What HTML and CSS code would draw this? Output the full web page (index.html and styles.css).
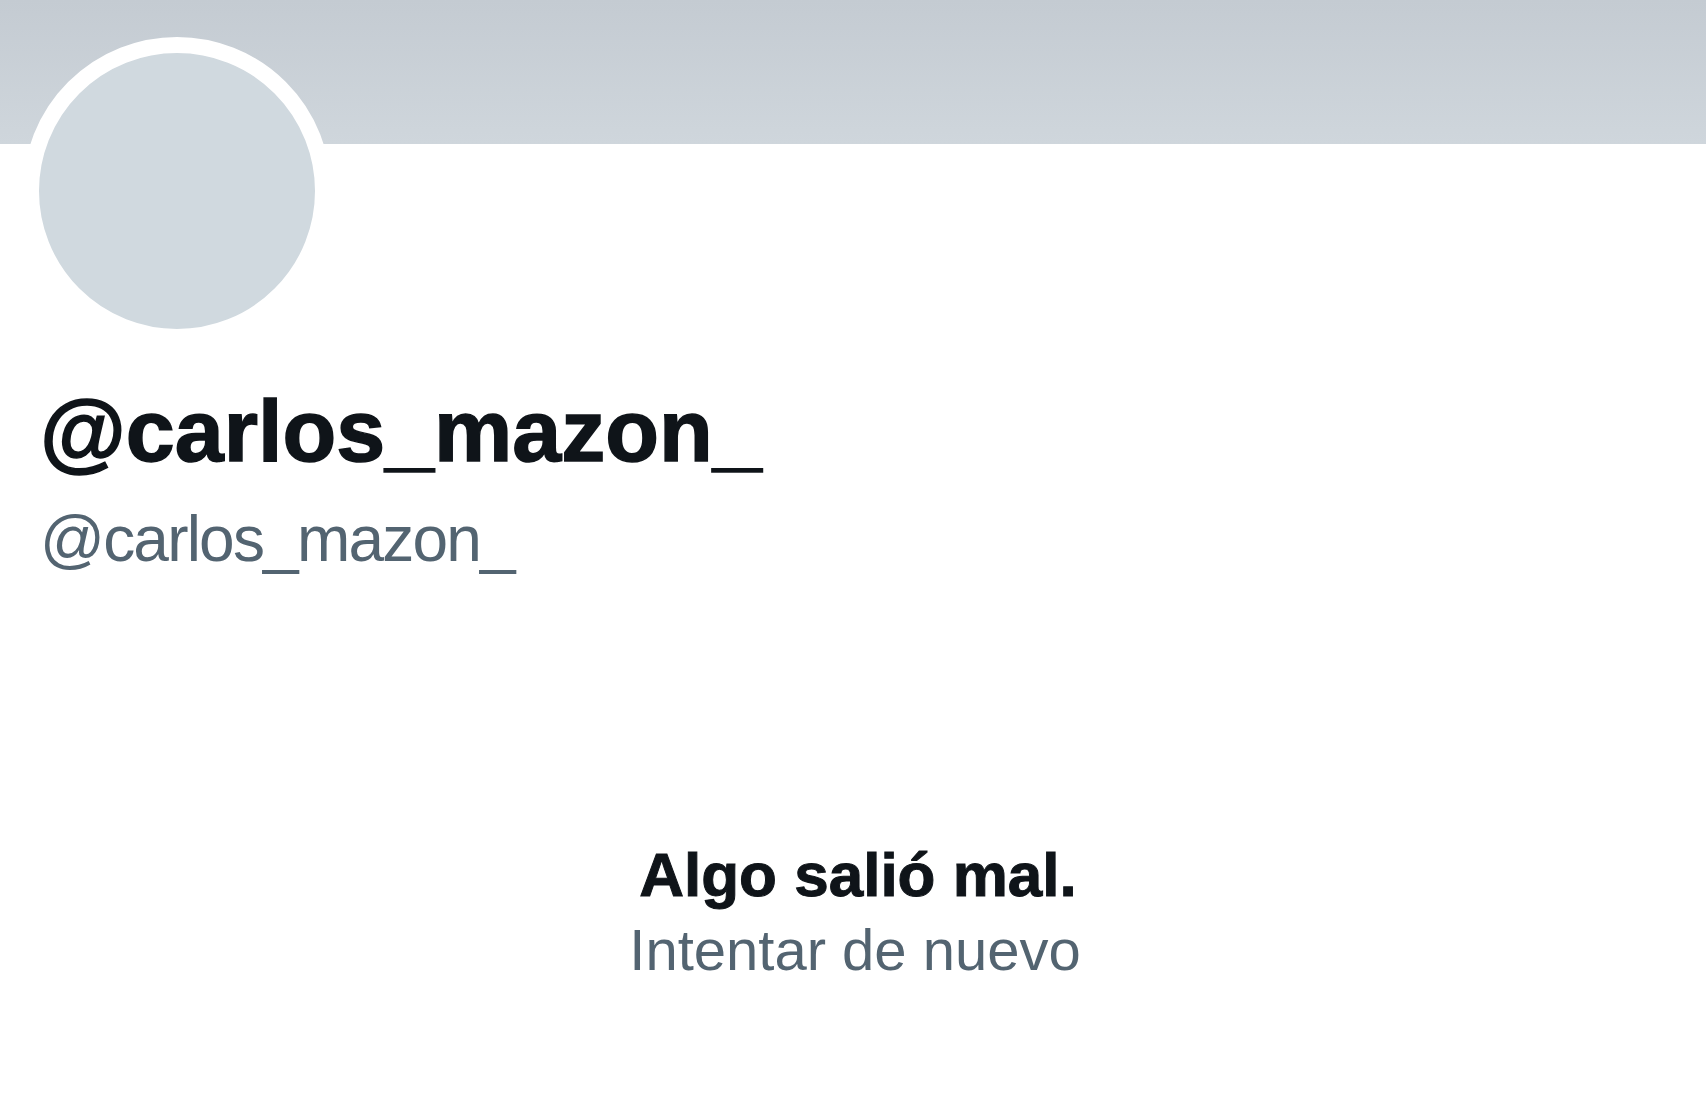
FILE: index.html
```html
<!DOCTYPE html>
<html lang="es">
<head>
    <meta charset="UTF-8">
    <meta name="viewport" content="width=device-width, initial-scale=1.0">
    <title>@carlos_mazon_</title>
    <link rel="stylesheet" href="styles.css">
</head>
<body>
    <div class="banner"></div>

    <div class="profile">
        <div class="avatar"></div>
        <div class="names">
            <h1 class="display-name">@carlos_mazon_</h1>
            <p class="handle">@carlos_mazon_</p>
        </div>
    </div>

    <div class="error-box">
        <p class="error-title">Algo salió mal.</p>
        <a href="#" class="retry">Intentar de nuevo</a>
    </div>
</body>
</html>
```

FILE: styles.css
```css
body {
    margin: 0;
    font-family: "Liberation Sans", Arial, sans-serif;
    background-color: #fff;
    color: #0f1419;
    overflow: hidden;
}

.banner {
    height: 144px;
    background: linear-gradient(to bottom, #c4cbd2, #cfd6dc);
}

.profile {
    padding-left: 23px;
}

.avatar {
    width: 276px;
    height: 276px;
    margin-top: -107px;
    border: 16px solid #fff;
    border-radius: 50%;
    background-color: #d0d9df;
}

.names {
    padding-left: 17px;
    margin-top: 42px;
}

.display-name {
    margin: 0;
    font-size: 88px;
    font-weight: bold;
    line-height: 1;
    color: #0f1419;
    -webkit-text-stroke: 1.5px #0f1419;
}

.handle {
    margin: 32px 0 0;
    font-size: 64px;
    line-height: 1;
    letter-spacing: -1.8px;
    color: #536471;
}

.error-box {
    margin-top: 273px;
    display: flex;
    flex-direction: column;
    align-items: center;
    gap: 15px;
}

.error-title {
    margin: 0;
    font-size: 62px;
    font-weight: bold;
    line-height: 1;
    padding-left: 10px;
    -webkit-text-stroke: 1px #0f1419;
}

.retry {
    font-size: 58px;
    line-height: 1;
    color: #536471;
    text-decoration: none;
    padding-left: 4px;
}
```
